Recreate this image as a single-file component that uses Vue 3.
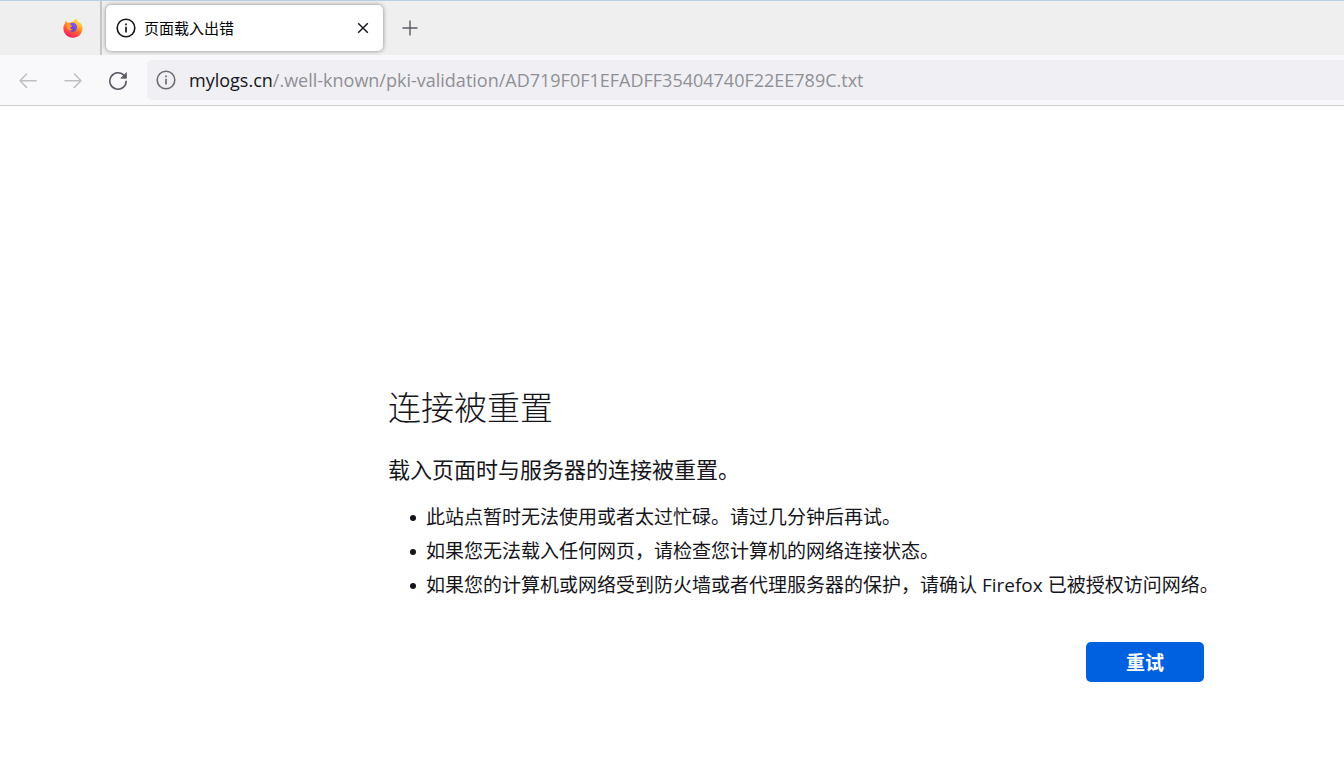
<script setup>
const host = 'mylogs.cn'
const path = '/.well-known/pki-validation/AD719F0F1EFADFF35404740F22EE789C.txt'
const hints = [
  '此站点暂时无法使用或者太过忙碌。请过几分钟后再试。',
  '如果您无法载入任何网页，请检查您计算机的网络连接状态。',
  '如果您的计算机或网络受到防火墙或者代理服务器的保护，请确认 Firefox 已被授权访问网络。'
]
const reload = () => window.location.reload()
</script>

<template>
  <div class="browser">
    <header>
      <div class="tabs">
        <button class="pinned" aria-label="Firefox">
          <svg width="20" height="20" viewBox="0 0 20 20">
            <defs>
              <linearGradient id="flame" x1="0.8" y1="0" x2="0.3" y2="1">
                <stop offset="0" stop-color="#fff44f" />
                <stop offset="0.35" stop-color="#ffb02e" />
                <stop offset="0.65" stop-color="#ff5a36" />
                <stop offset="1" stop-color="#f0196b" />
              </linearGradient>
              <linearGradient id="globe" x1="0.8" y1="0" x2="0.2" y2="1">
                <stop offset="0" stop-color="#9059ff" />
                <stop offset="1" stop-color="#5b3fc8" />
              </linearGradient>
            </defs>
            <path fill="url(#flame)" d="M3.2 2.6 C3.3 3.6 3.7 4.2 4.4 4.7 C5.2 4.5 6 4.5 6.6 4.7 C8 3.8 9.4 3.4 10.8 3.5 C11 2.2 11.9 1 13.2 0.3 C13.4 2.5 15 3.5 16.3 4.8 L16.8 4.2 C18.8 6 19.8 8.2 19.6 10.8 C19.2 16 15.2 19.7 10 19.7 C4.6 19.7 0.5 15.8 0.4 10.5 C0.3 8.3 1 6.5 1.9 5.4 C2 4.3 2.5 3.3 3.2 2.6 Z" />
            <path fill="url(#globe)" d="M7 5.6 C8.5 4.4 11.6 4.4 13 6.2 C14.7 8.4 14.4 11.4 12.3 13 C10.3 14.5 7.3 13.8 6.2 12 C7.4 12.5 8.8 12.2 9.8 11.4 C8.5 11.2 7 10.7 6.6 9.6 C7.2 9.1 8.3 9 9 8.4 C8.1 7.9 7.2 7.2 7 5.6 Z" />
            <path fill="#ff9a2c" d="M4.4 5.4 C5.4 5 6.4 5.2 7.1 5.7 C7.1 7 8.2 7.8 9.3 8.2 C8.9 9 7.3 9 6.6 9.7 C6.8 10.8 8.4 11.2 9.9 11.4 C8.6 12.7 6.4 12.7 5 11.5 C3.6 10 3.5 7.2 4.4 5.4 Z" />
          </svg>
        </button>
        <div class="tab">
          <svg class="info" width="20" height="20" viewBox="0 0 20 20" fill="none" stroke="currentColor">
            <circle cx="10" cy="10" r="8.8" stroke-width="1.6" />
            <path d="M10 8.8V14.5M10 5.4V7.2" stroke-width="1.7" />
          </svg>
          <span class="title">页面载入出错</span>
          <button class="close" aria-label="关闭标签页">
            <svg width="12" height="12" viewBox="0 0 12 12" fill="none" stroke="currentColor" stroke-width="1.4">
              <path d="M1.2 1.2L10.8 10.8M10.8 1.2L1.2 10.8" />
            </svg>
          </button>
        </div>
        <button class="new" aria-label="新建标签页">
          <svg width="16" height="16" viewBox="0 0 16 16" fill="none" stroke="currentColor" stroke-width="1.4">
            <path d="M8 .5V15.5M.5 8H15.5" />
          </svg>
        </button>
      </div>

      <nav class="toolbar">
        <button class="tool" disabled aria-label="后退">
          <svg width="20" height="20" viewBox="0 0 20 20" fill="none" stroke="currentColor" stroke-width="1.5" stroke-linecap="round" stroke-linejoin="round">
            <path d="M18 10.7H2M8.6 4L2 10.7L8.6 17.4" />
          </svg>
        </button>
        <button class="tool" disabled aria-label="前进">
          <svg width="20" height="20" viewBox="0 0 20 20" fill="none" stroke="currentColor" stroke-width="1.5" stroke-linecap="round" stroke-linejoin="round">
            <path d="M2 10.7H18M11.4 4L18 10.7L11.4 17.4" />
          </svg>
        </button>
        <button class="tool" aria-label="刷新" @click="reload">
          <svg width="20" height="20" viewBox="0 0 20 20" fill="none" stroke="currentColor" stroke-width="1.6" stroke-linecap="round">
            <path d="M16.2 5.6A8.2 8.2 0 1 0 18.2 11.4" />
            <path d="M18.4 3V8.2H13.2Z" fill="currentColor" stroke-width=".8" stroke-linejoin="round" />
          </svg>
        </button>
        <div class="address">
          <svg class="info" width="20" height="20" viewBox="0 0 20 20" fill="none" stroke="currentColor">
            <circle cx="10" cy="10" r="8.8" stroke-width="1.6" />
            <path d="M10 8.8V14.5M10 5.4V7.2" stroke-width="1.7" />
          </svg>
          <div class="url" role="textbox" aria-label="地址栏" contenteditable="true" spellcheck="false"><span class="host">{{ host }}</span>{{ path }}</div>
        </div>
      </nav>
    </header>

    <main>
      <h1>连接被重置</h1>
      <p>载入页面时与服务器的连接被重置。</p>
      <ul>
        <li v-for="hint in hints" :key="hint">{{ hint }}</li>
      </ul>
      <button class="retry" @click="reload">重试</button>
    </main>
  </div>
</template>

<style>
body {
  background: #fff;
}
</style>

<style scoped>
.browser {
  font-family: "Open Sans", "Noto Sans CJK SC", sans-serif;
  color: #15141a;
}

button {
  display: flex;
  align-items: center;
  justify-content: center;
  padding: 0;
  border: 0;
  background: none;
  color: inherit;
  font: inherit;
}

svg {
  flex: none;
}

header {
  border-bottom: 1px solid #cfcfd2;
}

.tabs {
  display: flex;
  align-items: center;
  height: 54px;
  border-top: 1px solid #b9cfe2;
  background: #efefef;
}

.pinned {
  align-self: stretch;
  width: 102px;
  padding-left: 46px;
  border-right: 2px solid #c6c6c8;
}

.tab {
  display: flex;
  align-items: center;
  gap: 8px;
  box-sizing: border-box;
  width: 277px;
  height: 46px;
  margin-left: 4px;
  padding: 0 10px;
  border-radius: 5px;
  background: #fff;
  box-shadow: 0 0 4px rgba(0, 0, 0, 0.45);
}

.title {
  flex: 1;
  color: #000;
  font-size: 15px;
  line-height: 24px;
}

.close {
  width: 20px;
  height: 20px;
}

.new {
  width: 32px;
  height: 32px;
  margin-left: 11px;
  color: #5b5b66;
}

.toolbar {
  display: flex;
  align-items: center;
  height: 50px;
  padding-left: 5px;
  background: #f9f9fb;
}

.tool {
  width: 45px;
  height: 40px;
  color: #5b5b66;
}

.tool:disabled {
  color: #bfbfc3;
}

.address {
  display: flex;
  flex: 1;
  align-items: center;
  gap: 13px;
  min-width: 0;
  height: 40px;
  margin-left: 7px;
  padding-left: 9px;
  border-radius: 5px 0 0 5px;
  background: #f0f0f4;
}

.address .info {
  color: #6b6b74;
}

.url {
  flex: 1;
  min-width: 0;
  overflow: hidden;
  color: #8f8f96;
  font-size: 18px;
  line-height: 28px;
  white-space: nowrap;
  outline: none;
}

.host {
  color: #15141a;
}

main {
  display: flex;
  flex-direction: column;
  max-width: 816px;
  margin: 277px 120px 0 388px;
}

h1 {
  margin: 0;
  font-size: 33px;
  font-weight: 300;
  line-height: 50px;
}

p {
  margin: 18px 0 0;
  font-size: 22px;
  line-height: 36px;
}

ul {
  margin: 13px -20px 0 0;
  padding: 0;
  font-size: 19px;
  line-height: 34px;
  list-style: none;
}

li {
  display: flex;
  gap: 10px;
  padding-left: 22px;
}

li::before {
  content: "";
  flex: none;
  width: 6px;
  height: 6px;
  margin-top: 15px;
  border-radius: 50%;
  background: currentColor;
}

.retry {
  align-self: flex-end;
  width: 118px;
  height: 40px;
  margin-top: 40px;
  border-radius: 5px;
  background: #0061e0;
  color: #fff;
  font-size: 19px;
  font-weight: 700;
}
</style>
